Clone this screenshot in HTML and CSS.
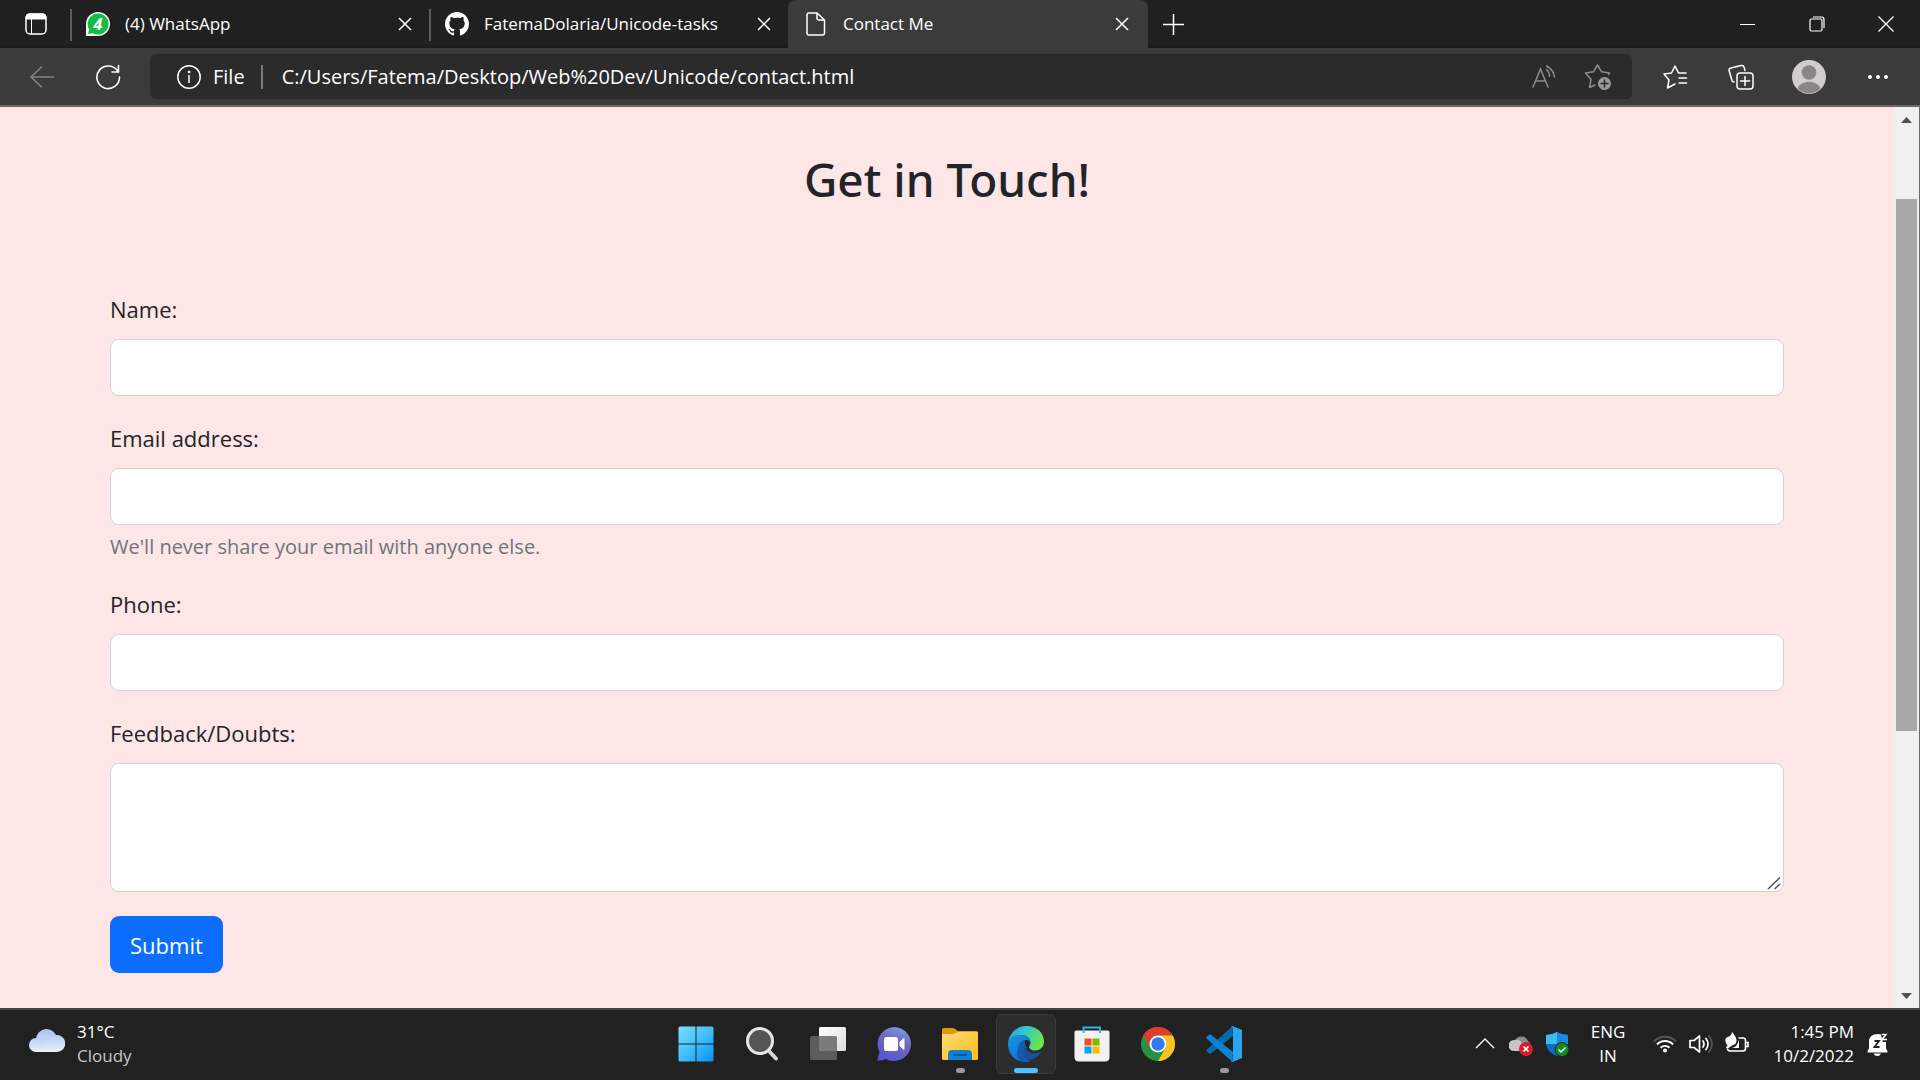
FILE: index.html
```html
<!DOCTYPE html>
<html lang="en">
<head>
<meta charset="utf-8">
<meta name="viewport" content="width=device-width, initial-scale=1">
<title>Contact Me</title>
<link rel="stylesheet" href="styles.css">
</head>
<body>
<header class="browser">
  <div class="tabstrip">
    <button class="tab-actions" type="button" aria-label="Tab actions">
      <svg width="24" height="24" viewBox="0 0 24 24" fill="none" stroke="#fff"><rect x="2" y="2" width="20" height="20" rx="4" stroke-width="1.5"/><path d="M2 7V5q0-3 3-3h14q3 0 3 3v2z" fill="#fff"/><path d="M7.500 7v15"/></svg>
    </button>
    <div class="tab">
      <svg width="24" height="24" viewBox="0 0 24 24"><path d="M0 24V12A12 12 0 1 1 12 24Z" fill="#fff"/><path d="M12 1.500a10.500 10.500 0 1 1-5 19.700L2 22l1.200-4.500A10.500 10.500 0 0 1 12 1.500z" fill="#12bd46"/><text x="12" y="18" class="favicon-count">4</text></svg>
      <span class="tab-title">(4) WhatsApp</span>
      <button class="tab-close" type="button" aria-label="Close tab"><svg width="14" height="14" viewBox="0 0 14 14"><path d="M1 1l12 12M13 1L1 13" stroke="#fff" stroke-width="1.500"/></svg></button>
    </div>
    <div class="tab">
      <svg width="24" height="24" viewBox="0 0 16 16"><path fill="#fff" d="M8 0C3.580 0 0 3.580 0 8c0 3.540 2.290 6.530 5.470 7.590.4.070.55-.17.55-.38 0-.19-.01-.82-.01-1.490-2.010.37-2.530-.49-2.690-.94-.09-.23-.48-.94-.82-1.130-.28-.15-.68-.52-.01-.53.63-.01 1.080.58 1.230.82.72 1.210 1.870.87 2.330.66.070-.52.28-.87.51-1.070-1.780-.2-3.640-.89-3.640-3.950 0-.87.31-1.590.82-2.150-.08-.2-.36-1.020.08-2.120 0 0 .67-.21 2.200.82.64-.18 1.320-.27 2-.27.68 0 1.360.09 2 .27 1.530-1.040 2.200-.82 2.200-.82.44 1.100.16 1.920.08 2.120.51.56.82 1.270.82 2.150 0 3.070-1.870 3.750-3.650 3.950.29.25.54.73.54 1.480 0 1.070-.01 1.930-.01 2.200 0 .21.15.46.55.38A8.012 8.012 0 0 0 16 8c0-4.420-3.580-8-8-8z"/></svg>
      <span class="tab-title">FatemaDolaria/Unicode-tasks</span>
      <button class="tab-close" type="button" aria-label="Close tab"><svg width="14" height="14" viewBox="0 0 14 14"><path d="M1 1l12 12M13 1L1 13" stroke="#fff" stroke-width="1.500"/></svg></button>
    </div>
    <div class="tab tab-active">
      <svg width="20" height="24" viewBox="0 0 20 24" fill="none" stroke="#fff" stroke-width="1.500" stroke-linejoin="round"><path d="M3 1h8l7.500 7v13q0 2-2 2H3q-2 0-2-2V3q0-2 2-2zM11 1v5q0 2 2 2h5.500"/></svg>
      <span class="tab-title">Contact Me</span>
      <button class="tab-close" type="button" aria-label="Close tab"><svg width="14" height="14" viewBox="0 0 14 14"><path d="M1 1l12 12M13 1L1 13" stroke="#fff" stroke-width="1.500"/></svg></button>
    </div>
    <button class="new-tab" type="button" aria-label="New tab"><svg width="21" height="21" viewBox="0 0 21 21"><path d="M10.500 0v21M0 10.500h21" stroke="#fff" stroke-width="1.500"/></svg></button>
    <div class="window-controls">
      <button type="button" aria-label="Minimize"><svg width="16" height="16" viewBox="0 0 16 16"><path d="M0 8.500h15" stroke="#fff"/></svg></button>
      <button type="button" aria-label="Restore"><svg width="16" height="16" viewBox="0 0 16 16" fill="none" stroke="#fff" stroke-width="1.200"><rect x="1" y="3" width="12" height="12" rx="1.500"/><path d="M4 1h8.500q2.500 0 2.500 2.500V12"/></svg></button>
      <button type="button" aria-label="Close"><svg width="16" height="16" viewBox="0 0 16 16"><path d="M.5.5l15 15M15.500.5l-15 15" stroke="#fff" stroke-width="1.300"/></svg></button>
    </div>
  </div>
  <div class="toolbar">
    <button class="tool" type="button" aria-label="Back"><svg width="26" height="24" viewBox="0 0 26 24" fill="none" stroke="#838383" stroke-width="1.500"><path d="M25 12H2M13 1.500L2 12l11 10.500"/></svg></button>
    <button class="tool" type="button" aria-label="Refresh"><svg width="26" height="26" viewBox="0 0 26 26" fill="none" stroke="#fff" stroke-width="1.600" stroke-linecap="round"><path d="M23.200 8A11.300 11.300 0 1 0 24.500 13M23.500 1.500V8H17"/></svg></button>
    <div class="address">
      <svg width="24" height="24" viewBox="0 0 24 24" fill="none" stroke="#fff" stroke-width="1.500"><circle cx="12" cy="12" r="11.200"/><path d="M12 10v8"/><circle cx="12" cy="7" r=".6"/></svg>
      <label class="scheme" for="url">File</label>
      <input class="url" id="url" type="text" value="C:/Users/Fatema/Desktop/Web%20Dev/Unicode/contact.html">
      <button class="address-tool" type="button" aria-label="Read aloud"><svg width="26" height="26" viewBox="0 0 26 26" fill="none" stroke="#8d8d8d" stroke-width="1.500" stroke-linecap="round"><path d="M2 23L9.500 5 17 23M5 17h9.500M15.500 5.500q3 2.500 3 7M15.500 2q7 3.500 8 11"/></svg></button>
      <button class="address-tool" type="button" aria-label="Add to favorites"><svg width="28" height="28" viewBox="0 0 28 28" fill="none" stroke="#8d8d8d" stroke-width="1.500" stroke-linejoin="round" stroke-linecap="round"><path d="M24.500 11.500l1-1.500-8-1.200L13.500 2l-4 6.800-8 1.200 5.500 6.500-1.500 8 5.500-2.500"/><circle cx="20.500" cy="20.500" r="6.500" fill="#9a9a9a" stroke="none"/><path d="M20.500 17v7M17 20.500h7" stroke="#2b2b2b"/></svg></button>
    </div>
    <button class="tool" type="button" aria-label="Favorites"><svg width="26" height="26" viewBox="0 0 26 26" fill="none" stroke="#fff" stroke-width="1.500" stroke-linejoin="round" stroke-linecap="round"><path d="M24 9h-7.500L13 2 9.500 9 2 10l5 6-1.500 8 7.500-4M17 14h7.500M17 19h7.500"/></svg></button>
    <button class="tool" type="button" aria-label="Collections"><svg width="26" height="26" viewBox="0 0 26 26" fill="none" stroke="#fff" stroke-width="1.500" stroke-linecap="round"><rect x="9" y="9" width="16" height="16" rx="3"/><path d="M17 12.500v9M12.500 17h9M17 6.500L16 3q-.5-2-3-1.500L3 4Q.5 4.500 1.200 7L4 16.500Q4.500 18 6 18"/></svg></button>
    <button class="tool tool-wide" type="button" aria-label="Profile"><svg width="34" height="34" viewBox="0 0 34 34"><circle cx="17" cy="17" r="17" fill="#d0cdca"/><circle cx="17" cy="12.500" r="7.300" fill="#8a8683"/><path d="M5.500 28.500C9 19.500 25 19.500 28.500 28.500A16 16 0 0 1 5.500 28.500z" fill="#8a8683"/></svg></button>
    <button class="tool tool-wide" type="button" aria-label="Settings and more"><svg width="20" height="6" viewBox="0 0 20 6" fill="#fff"><circle cx="2" cy="3" r="2"/><circle cx="10" cy="3" r="2"/><circle cx="18" cy="3" r="2"/></svg></button>
  </div>
</header>

<div class="viewport">
  <main class="page">
    <h1 class="heading">Get in Touch!</h1>
    <form class="contact-form">
      <div class="field">
        <label for="name">Name:</label>
        <input class="control" id="name" type="text">
      </div>
      <div class="field">
        <label for="email">Email address:</label>
        <input class="control" id="email" type="email" aria-describedby="email-help">
        <small class="help" id="email-help">We'll never share your email with anyone else.</small>
      </div>
      <div class="field">
        <label for="phone">Phone:</label>
        <input class="control" id="phone" type="tel">
      </div>
      <div class="field">
        <label for="feedback">Feedback/Doubts:</label>
        <div class="area">
          <textarea class="control control-area" id="feedback" rows="3"></textarea>
          <svg class="grip" width="14" height="14" viewBox="0 0 14 14" stroke="#555" stroke-width="1.500"><path d="M1 13L13 1.500M7.500 13L13 8"/></svg>
        </div>
      </div>
      <button class="submit" type="button">Submit</button>
    </form>
  </main>
  <div class="scrollbar">
    <svg width="11" height="6" viewBox="0 0 11 6"><path d="M0 6L5.500 0 11 6z" fill="#505050"/></svg>
    <div class="track"><div class="thumb"></div></div>
    <svg width="11" height="6" viewBox="0 0 11 6"><path d="M0 0h11L5.500 6z" fill="#505050"/></svg>
  </div>
</div>

<footer class="taskbar">
  <div class="weather">
    <svg width="36" height="36" viewBox="0 -3 36 36"><defs><linearGradient id="cl1" x2="0" y2="1"><stop stop-color="#a9c3f0"/><stop offset="1" stop-color="#dce8fa"/></linearGradient><linearGradient id="cl2" x2="0" y2="1"><stop stop-color="#b8cff3"/><stop offset="1" stop-color="#e9f1fb"/></linearGradient></defs><path d="M7 14V11a10.500 10.500 0 0 1 21-1v10H7z" fill="url(#cl1)"/><rect y="9" width="26" height="14" rx="7" fill="url(#cl2)"/><path d="M14 23l6-12a8.500 8.500 0 1 1 8 12z" fill="url(#cl2)"/></svg>
    <div class="weather-text"><div>31°C</div><div class="weather-sky">Cloudy</div></div>
  </div>
  <nav class="apps">
    <button class="app" type="button" aria-label="Start"><svg width="36" height="36" viewBox="0 0 36 36"><defs><linearGradient id="win" x2="1" y2="1"><stop stop-color="#7fdcff"/><stop offset=".5" stop-color="#3fc0fb"/><stop offset="1" stop-color="#0a8ff5"/></linearGradient></defs><path d="M2 .5h15.500v17H.5V2q0-1.500 1.500-1.500zM18.500.5H34q1.500 0 1.500 1.500v15.500h-17zM.5 18.500h17v17H2q-1.500 0-1.500-1.500zM18.500 18.500h17V34q0 1.500-1.500 1.500H18.500z" fill="url(#win)"/></svg></button>
    <button class="app" type="button" aria-label="Search"><svg width="36" height="36" viewBox="0 0 36 36"><path d="M24 24l8 8.500" stroke="#d3d5d8" stroke-width="4" stroke-linecap="round"/><circle cx="16" cy="15" r="12.500" fill="#555" stroke="#e3e5e8" stroke-width="3"/></svg></button>
    <button class="app" type="button" aria-label="Task view"><svg width="36" height="36" viewBox="0 0 36 36"><defs><linearGradient id="tv" x2="1" y2="1"><stop stop-color="#fff"/><stop offset="1" stop-color="#ddd"/></linearGradient></defs><rect x="9" y="1" width="27" height="24" rx="1.500" fill="url(#tv)"/><rect y="10" width="27" height="24" rx="1.500" fill="#666" fill-opacity=".85"/></svg></button>
    <button class="app" type="button" aria-label="Chat"><svg width="36" height="36" viewBox="0 0 36 36"><defs><linearGradient id="chat" x1=".8" x2=".4" y2="1"><stop stop-color="#7d9be8"/><stop offset=".45" stop-color="#7367bb"/><stop offset="1" stop-color="#5558cf"/></linearGradient></defs><path d="M18 1a17 17 0 1 1-8 32Q6 34.500 2 34.500 1.200 34.500 1.500 33.500L3.500 26A17 17 0 0 1 18 1z" fill="url(#chat)"/><rect x="8" y="11" width="14" height="14" rx="2.500" fill="#fff"/><path d="M24 16l4-3.500v11L24 20z" fill="#fff" stroke="#fff" stroke-linejoin="round"/></svg></button>
    <button class="app app-open" type="button" aria-label="File Explorer"><svg width="36" height="36" viewBox="0 0 36 36"><defs><linearGradient id="fold" x2="1" y2="1"><stop stop-color="#ffde78"/><stop offset="1" stop-color="#fbb917"/></linearGradient></defs><path d="M0 3.500Q0 2 1.500 2H11q1.500 0 3 1.500L16 5h18.500Q36 5 36 7v8H0z" fill="#dd9a05"/><path d="M0 8h11q1.500 0 3-1.200Q15 6 17 6h19v26.500q0 1.500-1.500 1.500h-33Q0 34 0 32.500z" fill="url(#fold)"/><path d="M6 34V28q0-4 4-4h16q4 0 4 4v6z" fill="#1280d0"/><path d="M11 29h14" stroke="#064c8f" stroke-width="1.500"/></svg></button>
    <button class="app app-current" type="button" aria-label="Microsoft Edge"><svg width="36" height="36" viewBox="0 0 36 36"><defs><linearGradient id="ed1" x2="1" y2=".3"><stop stop-color="#2c9ee8"/><stop offset=".5" stop-color="#2fc8cf"/><stop offset="1" stop-color="#6ce54f"/></linearGradient><linearGradient id="ed2" x2=".6" y2="1"><stop stop-color="#1b96dc"/><stop offset="1" stop-color="#0872cf"/></linearGradient></defs><path d="M0 17C1 7 9 0 18 0c11 0 18 7 18 15.500 0 6-4.500 9-9 9-4 0-6-1.500-6-3 0-1.500 1.500-2 1.500-5 0-4-4-7.500-10-7.500C6 9 1 13 0 17z" fill="url(#ed1)"/><path d="M0 18C1 12 6 9 12 9c6 0 10.500 3.500 10.500 8l-1.500 4-9 3 5 11.900C7 36 0 28 0 18z" fill="url(#ed2)"/><path d="M17 14c-7 2-8 9-5 14 4 7 14 9 21-1.500q.5-1-1-.5c-4 2-9 2-12-1-3-2.500-4-6.500-3-11z" fill="#174f9d"/><path d="M12.500 34.900C7 31 8 18 17 14c-1 2-2 5 0 8.500C13 26 15 33 23 35.300q-5 1.500-10.500-.4z" fill="#135ab0"/><path d="M17 14c3-.5 5.500 1 5 4-.3 1.500-1.500 2-1 3.500l2 2.500c-4-1-7-4.500-6-10z" fill="#262626"/></svg></button>
    <button class="app" type="button" aria-label="Microsoft Store"><svg width="36" height="36" viewBox="0 0 36 36"><path d="M.5 6Q.5 4.500 2 4.500h32q1.500 0 1.500 1.500v25q0 4.500-4.500 4.500H5Q.5 35.500.5 31z" fill="#f2f2f2"/><path d="M9.500 7V1.500h16.500V7" fill="none" stroke="#2bb3ea" stroke-width="2"/><path d="M10.500 12.500h7v7h-7z" fill="#f25022"/><path d="M18.500 12.500h7v7h-7z" fill="#7fba00"/><path d="M10.500 20.500h7v7h-7z" fill="#00a4ef"/><path d="M18.500 20.500h7v7h-7z" fill="#ffb900"/></svg></button>
    <button class="app" type="button" aria-label="Google Chrome"><svg width="36" height="36" viewBox="0 0 36 36"><circle cx="18" cy="18" r="17" fill="#269245"/><path d="M3.300 9.500A17 17 0 0 1 32.700 9.500H18A8.500 8.500 0 0 0 10.600 22.200z" fill="#e23c31"/><path d="M32.700 9.500A17 17 0 0 1 18 35L25.400 22.200A8.500 8.500 0 0 0 18 9.500z" fill="#fcc31e"/><circle cx="18" cy="18" r="8.500" fill="#fff"/><circle cx="18" cy="18" r="6.700" fill="#3079ee"/></svg></button>
    <button class="app app-open" type="button" aria-label="Visual Studio Code"><svg width="36" height="36" viewBox="0 0 36 36"><path d="M26.500 0L.8 23.500q-1 1 0 2L3 27.500q1 .8 2 0L27 10z" fill="#0868ac"/><path d="M5 8.800q-1-.8-2 0L.8 10.800q-1 1 0 2L26.500 36 27 26z" fill="#0b83cf"/><path d="M26.500 0L36 4v28l-9.500 4q-1 0-1.500-1 2 .5 2-2V3q0-2.500-2-2z" fill="#2aa6f1"/></svg></button>
  </nav>
  <div class="tray">
    <svg width="24" height="24" viewBox="0 0 24 24"><path d="M3 16l9-9 9 9" fill="none" stroke="#fff" stroke-width="1.400"/></svg>
    <svg width="24" height="24" viewBox="0 0 24 24"><path d="M6 9a7 7 0 0 1 13 0q3 2 2 6H6z" fill="#8c8c8c"/><path d="M5 19a5 5 0 0 1 0-11q5-2 8 3l4 8z" fill="#c6c6c6"/><circle cx="17" cy="17" r="7" fill="#d71f2c"/><path d="M14.500 14.500l5 5M19.500 14.500l-5 5" stroke="#fff" stroke-width="1.600"/></svg>
    <svg width="24" height="24" viewBox="0 0 24 24"><path d="M12 0q5 3 11 3v8q0 9-11 13Q1 20 1 11V3q6 0 11-3z" fill="#0f6cc4"/><path d="M12 0v12H1V3q6 0 11-3z" fill="#37bdf2"/><path d="M12 0q5 3 11 3v9H12z" fill="#1a8be0"/><circle cx="17" cy="17.500" r="7" fill="#138a1d" stroke="#1f1f1f"/><path d="M13.500 17.500l2.500 2.500 4.500-4.500" fill="none" stroke="#fff" stroke-width="1.500"/></svg>
    <div class="lang"><div>ENG</div><div>IN</div></div>
    <svg width="24" height="24" viewBox="0 0 24 24" fill="none" stroke="#fff" stroke-width="1.900"><path d="M1 9.500a15 15 0 0 1 22 0" stroke="#555"/><path d="M4 12.500a11 11 0 0 1 16 0M7.500 15.700a6.500 6.500 0 0 1 9 0"/><circle cx="12" cy="18.500" r="2" fill="#fff" stroke="none"/></svg>
    <svg width="24" height="24" viewBox="0 0 24 24" fill="none" stroke="#fff" stroke-width="1.700" stroke-linejoin="round" stroke-linecap="round"><path d="M1 8.500h4L10.500 4v16L5 15.500H1zM14 9q2 3 0 6M17 6.500q4 5.500 0 11"/><path d="M20 4q6 8 0 16" stroke="#555"/></svg>
    <svg width="24" height="24" viewBox="0 0 24 24" fill="none" stroke="#fff" stroke-width="1.600"><path d="M13.500 6h4.500q2.500 0 2.500 2.500v8q0 2.500-2.500 2.500H5q-2 0-2.500-2M21 10.500h2v4h-2"/><path d="M7 0q4.500 5 4.500 8.500 0 4-4.500 5L2 17l-1-1.500 1.500-2Q-3 6 5 4q2-1.500 2-4z" fill="#fff" stroke="none"/><path d="M14 8.500v7.500H6.500q6-1 7-7.500" fill="#fff" stroke="none"/></svg>
    <div class="clock"><time>1:45 PM</time><time>10/2/2022</time></div>
    <svg width="24" height="24" viewBox="0 0 24 24"><path d="M3 16v-6q0-8 9-8 8 0 8 8v6q0 1 1.500 3v1.500h-20V19Q3 17 3 16zM7.500 21.500h7.500q-1 2.500-3.700 2.500t-3.800-2.500z" fill="#fff"/><path d="M14 0h8v10h-5z" fill="#212121"/><path d="M8.500 9h4.500l-4.500 6h5" stroke="#212121" stroke-width="1.800" fill="none"/><path d="M15.500 2.500h4.500l-4 5h5" stroke="#fff" stroke-width="1.600" fill="none"/></svg>
  </div>
</footer>
</body>
</html>
```
FILE: styles.css
```css
* {
  box-sizing: border-box;
}

body {
  margin: 0;
  min-height: 100vh;
  display: flex;
  flex-direction: column;
  font-family: "Open Sans", "Noto Sans", sans-serif;
  color: #fff;
  background: #202020;
}

svg {
  display: block;
  flex: none;
}

button {
  display: flex;
  align-items: center;
  justify-content: center;
  flex: none;
  padding: 0;
  border: 0;
  background: none;
  color: inherit;
  font: inherit;
}

/* Browser chrome */

.browser {
  border-bottom: 2px solid #6b6b6b;
}

.tabstrip {
  display: flex;
  height: 48px;
  background: linear-gradient(#202020 45px, #1a1a1a);
}

.tab-actions {
  width: 70px;
  padding-left: 2px;
}

.tab {
  display: flex;
  align-items: center;
  flex: 0 1 359px;
  min-width: 0;
  gap: 15px;
  padding: 0 12px 0 14px;
  font-size: 17px;
  line-height: 22px;
  border-left: 2px solid;
  border-image: linear-gradient(transparent 10px, #5c5c5c 10px, #5c5c5c 40px, transparent 40px) 1;
}

.tab-active {
  flex-basis: 360px;
  gap: 17px;
  padding-left: 18px;
  padding-right: 14px;
  border: 0;
  border-radius: 8px 8px 0 0;
  background: #3b3b3b;
}

.tab-title {
  flex: 1;
  white-space: nowrap;
  overflow: hidden;
}

.tab-close {
  width: 24px;
  height: 24px;
}

.new-tab {
  width: 51px;
}

.window-controls {
  display: flex;
  margin-left: auto;
}

.window-controls button {
  width: 69px;
}

.favicon-count {
  font: italic 700 16px "Open Sans", sans-serif;
  text-anchor: middle;
  fill: #fff;
}

.toolbar {
  display: flex;
  align-items: center;
  padding: 6px 8px 6px 9px;
  background: #3b3b3b;
}

.tool {
  width: 66px;
  height: 45px;
}

.tool-wide {
  width: 69px;
}

.address {
  display: flex;
  align-items: center;
  flex: 1;
  height: 45px;
  margin: 0 10px 0 9px;
  padding: 0 7px 0 27px;
  border-radius: 6px;
  background: #2b2b2b;
  font-size: 20px;
}

.scheme {
  margin-left: 12px;
  padding-right: 16px;
  line-height: 24px;
  border-right: 2px solid #7a7a7a;
}

.url {
  flex: 1;
  min-width: 0;
  padding: 0 0 0 19px;
  border: 0;
  background: none;
  color: #fff;
  font: inherit;
}

.address-tool {
  width: 54px;
  height: 45px;
}

/* Web page */

.viewport {
  display: flex;
  flex: 1;
  border-right: 1px solid #6b6b6b;
  background: #fde6e5;
}

.page {
  flex: 1;
  padding: 36px 110px 24px;
  color: #212529;
}

.heading {
  margin: 0 0 76px;
  font-family: "Noto Sans", "Open Sans", sans-serif;
  font-size: 46px;
  line-height: 72px;
  font-weight: 500;
  text-align: center;
}

.contact-form {
  display: flex;
  flex-direction: column;
  align-items: stretch;
  gap: 24px;
  font-size: 22px;
  line-height: 36px;
}

.field {
  display: flex;
  flex-direction: column;
}

.field label {
  margin-bottom: 12px;
}

.control {
  display: block;
  width: 100%;
  height: 57px;
  padding: 9px 18px;
  border: 1px solid #ced4da;
  border-radius: 9px;
  background: #fff;
  color: #212529;
  font: inherit;
}

.control-area {
  height: 129px;
  resize: none;
}

.area {
  position: relative;
}

.grip {
  position: absolute;
  right: 3px;
  bottom: 2px;
}

.help {
  margin-top: 6px;
  font-size: 20px;
  line-height: 31px;
  color: #6c757d;
}

.submit {
  align-self: flex-start;
  height: 57px;
  padding: 0 20px;
  border-radius: 9px;
  background: #0d6efd;
  color: #fff;
}

.scrollbar {
  display: flex;
  flex-direction: column;
  align-items: center;
  width: 25px;
  padding: 10px 0 9px;
  background: #f0f0f0;
}

.track {
  display: flex;
  flex-direction: column;
  flex: 1;
  width: 21px;
  padding: 76px 0 0;
}

.thumb {
  height: 67%;
  background: #a8a8a8;
}

/* Taskbar */

.taskbar {
  display: grid;
  grid-template-columns: 1fr auto 1fr;
  align-items: center;
  height: 72px;
  padding-bottom: 2px;
  border-top: 2px solid #444;
  background: #212121;
  font-size: 17px;
  line-height: 24px;
}

.weather {
  display: flex;
  align-items: center;
  gap: 12px;
  padding-left: 29px;
}

.weather-sky {
  color: #c8c8c8;
}

.apps {
  display: flex;
  gap: 6px;
}

.app {
  position: relative;
  width: 60px;
  height: 60px;
  border-radius: 6px;
}

.app-current {
  border: 1px solid #3a3a3a;
  background: #2d2d2d;
}

.app-open::after,
.app-current::after {
  content: "";
  position: absolute;
  bottom: 1px;
  width: 9px;
  height: 5px;
  border-radius: 3px;
  background: #9a9a9a;
}

.app-current::after {
  bottom: 0;
  width: 24px;
  background: #4cc2ff;
}

.tray {
  display: flex;
  align-items: center;
  justify-content: flex-end;
  gap: 12px;
  padding-right: 30px;
}

.lang {
  width: 54px;
  margin-right: 6px;
  text-align: center;
}

.clock {
  display: flex;
  flex-direction: column;
  width: 93px;
  text-align: right;
}
```
